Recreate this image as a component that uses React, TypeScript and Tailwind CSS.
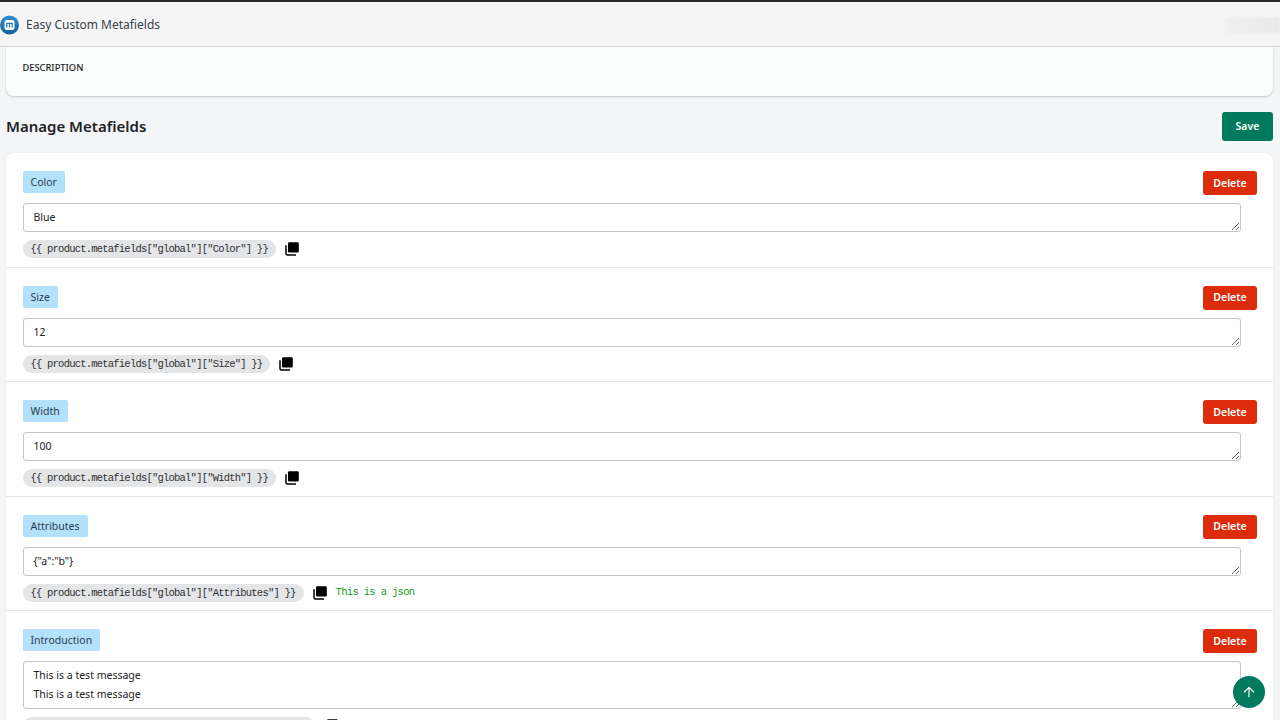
import { ArrowUp } from "lucide-react";

const FIELDS = [
  { name: "Color", value: "Blue" },
  { name: "Size", value: "12" },
  { name: "Width", value: "100" },
  { name: "Attributes", value: '{"a":"b"}', note: "This is a json" },
  { name: "Introduction", value: "This is a test message\nThis is a test message", tall: true },
];

function CopyIcon() {
  return (
    <svg width="14" height="14" viewBox="0 0 14 14" className="shrink-0">
      <rect x="3" y="0.2" width="10.8" height="10.2" rx="1.2" fill="#000" />
      <path d="M1 3.2V11.5a1.5 1.5 0 0 0 1.5 1.5H11" fill="none" stroke="#000" strokeWidth="1.5" />
    </svg>
  );
}

function Logo() {
  return (
    <svg width="19" height="20" viewBox="0 0 19 20" className="shrink-0">
      <defs>
        <linearGradient id="logo" x1="0" y1="0" x2="0" y2="1">
          <stop offset="0" stopColor="#2f8fd0" />
          <stop offset="1" stopColor="#17609a" />
        </linearGradient>
      </defs>
      <circle cx="9.5" cy="10" r="9.5" fill="url(#logo)" />
      <rect x="4.5" y="5" width="10" height="10" rx="2.5" fill="#fff" />
      <path d="M6.8 12.6V8.3h5.4v4.3M9.5 8.3v4.3" fill="none" stroke="#1f78b8" strokeWidth="1.2" />
    </svg>
  );
}

function FieldRow({ field, last }: { field: (typeof FIELDS)[number]; last: boolean }) {
  return (
    <div className={last ? "pt-[18px] pr-4 pb-4 pl-[16.5px]" : "h-[114.5px] border-b border-[#e5e7eb] pt-[18px] pr-4 pl-[16.5px]"}>
      <div className="flex items-start justify-between">
        <span className="rounded-[2px] bg-[#b3e0fb] px-2 text-[10.5px] leading-[22px] text-[#2a3f50]">{field.name}</span>
        <button className="h-6 w-[54px] rounded-[3px] bg-[#dc2c0c] pt-px text-[10.5px] font-semibold text-white">Delete</button>
      </div>
      <textarea
        readOnly
        value={field.value}
        className={
          "mt-2 block w-[1218.5px] rounded-[3px] border border-[#c2c6c6] bg-white px-[10px] text-[10.5px] text-[#202223] outline-none " +
          (field.tall ? "h-[48px] py-[4px] leading-[19px]" : "h-[29px] py-[5px] leading-[16px]")
        }
      />
      <div className="mt-2 flex h-[18px] items-center">
        <span className="rounded-full bg-[#e4e5e7] px-2 font-['Liberation_Mono',monospace] text-[10.5px] leading-[18px] tracking-[-0.78px] whitespace-pre text-[#303030]">
          {`{{ product.metafields["global"]["${field.name}"] }}`}
        </span>
        <span className="ml-[9px]">
          <CopyIcon />
        </span>
        {field.note && (
          <span className="ml-[9px] font-['Liberation_Mono',monospace] text-[10.5px] tracking-[-0.66px] text-[#1a9a1a]">{field.note}</span>
        )}
      </div>
    </div>
  );
}

export default function App() {
  return (
    <div className="relative flex h-[720px] flex-col overflow-hidden bg-[#f4f5f7] font-['Noto_Sans',sans-serif] text-[#202223]">
      <header className="flex h-[47px] shrink-0 items-center justify-between border-t-2 border-b border-t-[#2b2b2b] border-b-[#d4d6d8] bg-[#f5f5f6] pt-px">
        <div className="flex items-center gap-[7px]">
          <Logo />
          <span className="text-[12px] text-[#3a4248]">Easy Custom Metafields</span>
        </div>
        <div className="h-4 w-14 rounded-l bg-gradient-to-r from-[#f0f0f1] to-[#e9e9ea] blur-[1px]" />
      </header>
      <main className="flex flex-col pr-[7px] pl-[6px]">
        <div className="h-[49px] rounded-b-lg bg-[#fbfcfc] pt-[15px] pl-[16.5px] shadow-[0_1px_2px_rgba(0,0,0,0.2)]">
          <span className="block text-[9.3px] leading-[11px] font-medium text-[#202223]">DESCRIPTION</span>
        </div>
        <div className="mt-4 flex h-[29px] items-center justify-between">
          <h1 className="text-[15px] font-semibold text-[#1f2225]">Manage Metafields</h1>
          <button className="h-[29px] w-[51px] rounded-[3px] bg-[#007a5c] pt-px text-[10.5px] font-semibold text-white">Save</button>
        </div>
        <div className="mt-3 rounded-lg bg-white shadow-[0_0_2px_rgba(0,0,0,0.08)]">
          {FIELDS.map((field, i) => (
            <FieldRow key={field.name} field={field} last={i === FIELDS.length - 1} />
          ))}
        </div>
      </main>
      <button className="absolute top-[676px] left-[1233px] flex h-8 w-8 items-center justify-center rounded-full bg-[#007a5c] text-white">
        <ArrowUp size={16} strokeWidth={1.75} />
      </button>
    </div>
  );
}
